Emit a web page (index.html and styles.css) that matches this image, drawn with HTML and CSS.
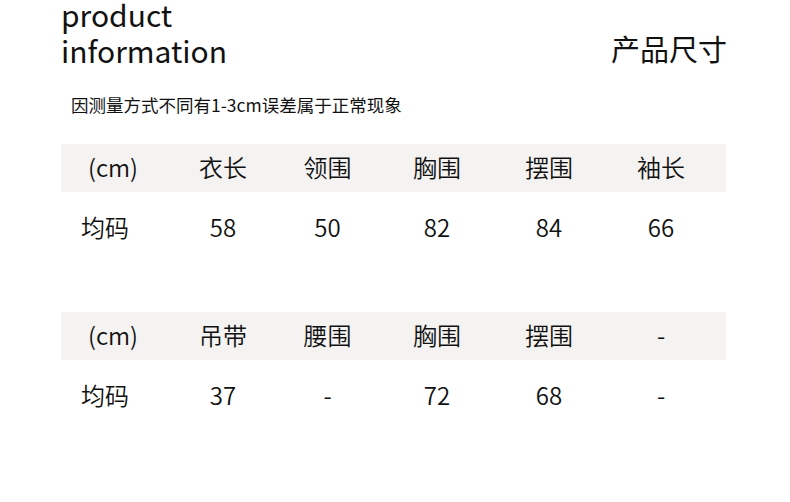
FILE: index.html
```html
<!DOCTYPE html>
<html lang="zh">
<head>
<meta charset="utf-8">
<link rel="stylesheet" href="styles.css">
</head>
<body>
<div class="page">
  <header class="head">
    <h1 class="title">product<br>information</h1>
    <div class="title-cn">产品尺寸</div>
  </header>
  <p class="note">因测量方式不同有1-3cm误差属于正常现象</p>

  <div class="table">
    <div class="row row-head">
      <div class="cell c1">(cm)</div>
      <div class="cell c2">衣长</div>
      <div class="cell">领围</div>
      <div class="cell">胸围</div>
      <div class="cell">摆围</div>
      <div class="cell">袖长</div>
    </div>
    <div class="row row-data">
      <div class="cell c1 size">均码</div>
      <div class="cell c2">58</div>
      <div class="cell">50</div>
      <div class="cell">82</div>
      <div class="cell">84</div>
      <div class="cell">66</div>
    </div>
  </div>

  <div class="table">
    <div class="row row-head">
      <div class="cell c1">(cm)</div>
      <div class="cell c2">吊带</div>
      <div class="cell">腰围</div>
      <div class="cell">胸围</div>
      <div class="cell">摆围</div>
      <div class="cell">-</div>
    </div>
    <div class="row row-data">
      <div class="cell c1 size">均码</div>
      <div class="cell c2">37</div>
      <div class="cell">-</div>
      <div class="cell">72</div>
      <div class="cell">68</div>
      <div class="cell">-</div>
    </div>
  </div>
</div>
</body>
</html>
```

FILE: styles.css
```css
html, body {
  margin: 0;
  padding: 0;
  background: #ffffff;
}

body {
  font-family: "Noto Sans CJK SC", "Noto Sans", sans-serif;
  color: #1c1c1c;
}

.page {
  width: 665px;
  padding-left: 61px;
}

.head {
  display: flex;
  justify-content: space-between;
  align-items: flex-start;
}

.title {
  margin: -4px 0 0 0;
  font-size: 30px;
  font-weight: 400;
  line-height: 36px;
  color: #111;
}

.title-cn {
  margin-top: 30px;
  font-size: 29px;
  line-height: 36px;
  margin-right: -1px;
  color: #111;
}

.note {
  margin: 25px 0 0 10px;
  font-size: 17.5px;
  line-height: 24px;
  color: #111;
}

.table {
  margin-top: 48px;
}

.note + .table {
  margin-top: 27px;
}

.row {
  display: grid;
  grid-template-columns: 104px 109px 107px 112px 112px 112px 9px;
  align-items: center;
  font-size: 24px;
  font-weight: 350;
  color: #111;
}

.row-head {
  height: 48px;
  background: #f4f3f2;
}

.row-data {
  height: 72px;
}

.cell {
  text-align: center;
  line-height: 30px;
  padding-bottom: 2px;
}

.c2 {
  padding-left: 7px;
}

.size {
  padding-right: 16px;
}
```
